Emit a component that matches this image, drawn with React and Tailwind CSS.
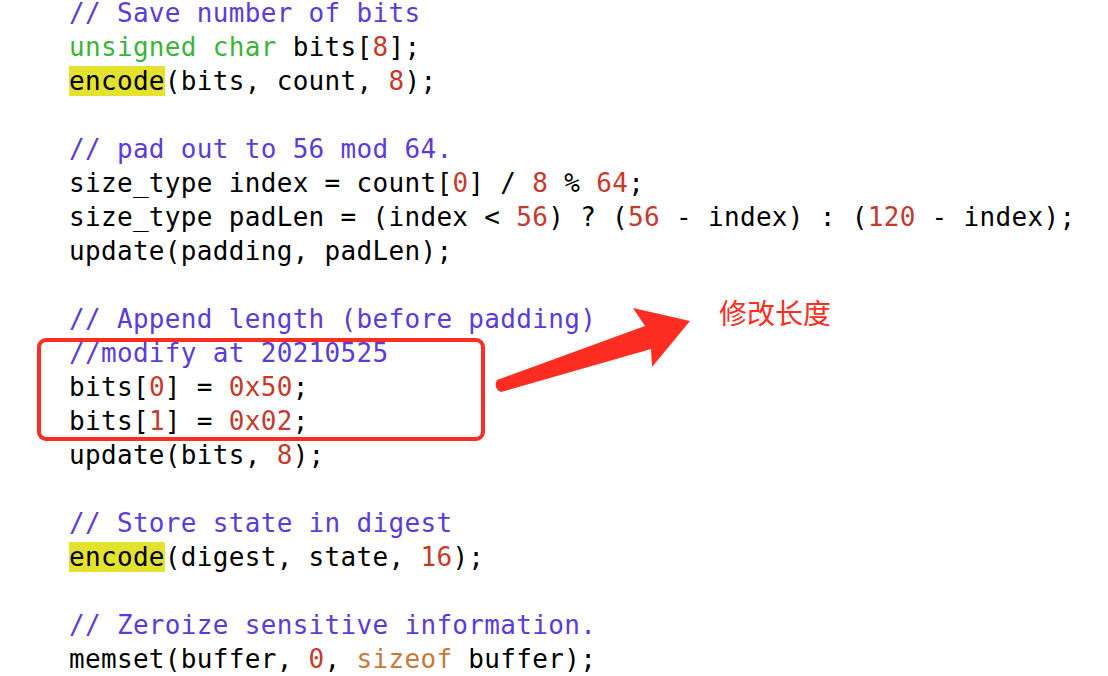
import React from "react";

const C = ({ children }) => <span className="text-[#5b3cd8]">{children}</span>;
const K = ({ children }) => <span className="text-[#3cb43c]">{children}</span>;
const N = ({ children }) => <span className="text-[#c63a2c]">{children}</span>;
const O = ({ children }) => <span className="text-[#c8793a]">{children}</span>;
const H = ({ children }) => <span className="bg-[#e3e22e]">{children}</span>;

const lines = [
  <C>// Save number of bits</C>,
  <>
    <K>unsigned</K> <K>char</K> bits[<N>8</N>];
  </>,
  <>
    <H>encode</H>(bits, count, <N>8</N>);
  </>,
  null,
  <C>// pad out to 56 mod 64.</C>,
  <>
    size_type index = count[<N>0</N>] / <N>8</N> % <N>64</N>;
  </>,
  <>
    size_type padLen = (index &lt; <N>56</N>) ? (<N>56</N> - index) : (<N>120</N> - index);
  </>,
  <>update(padding, padLen);</>,
  null,
  <C>// Append length (before padding)</C>,
  <C>//modify at 20210525</C>,
  <>
    bits[<N>0</N>] = <N>0x50</N>;
  </>,
  <>
    bits[<N>1</N>] = <N>0x02</N>;
  </>,
  <>
    update(bits, <N>8</N>);
  </>,
  null,
  <C>// Store state in digest</C>,
  <>
    <H>encode</H>(digest, state, <N>16</N>);
  </>,
  null,
  <C>// Zeroize sensitive information.</C>,
  <>
    memset(buffer, <N>0</N>, <O>sizeof</O> buffer);
  </>,
];

export default function App() {
  return (
    <div className="relative w-[1108px] h-[676px] overflow-hidden bg-white">
      <div className="-mt-1 pl-[69px] font-['DejaVu_Sans_Mono',monospace] text-[26px] leading-[34px] tracking-[0.32px] text-black whitespace-pre">
        {lines.map((l, i) => (
          <div key={i} className="h-[34px]">
            {l || " "}
          </div>
        ))}
      </div>

      <div className="absolute left-[37px] top-[338px] w-[448px] h-[103px] rounded-[9px] border-4 border-[#fe2d22]" />

      <svg className="absolute left-0 top-0" width="1108" height="676">
        <path
          d="M497 380 L645 326 L633 308 L690 321 L652 367 L651 349 L501 392 Q493 388 497 380 Z"
          fill="#fe2d22"
        />
      </svg>

      <div className="absolute left-[719px] top-[293px] text-[28px] leading-[38px] text-[#fe2d22] font-['Noto_Sans_CJK_SC',sans-serif]">
        修改长度
      </div>
    </div>
  );
}
